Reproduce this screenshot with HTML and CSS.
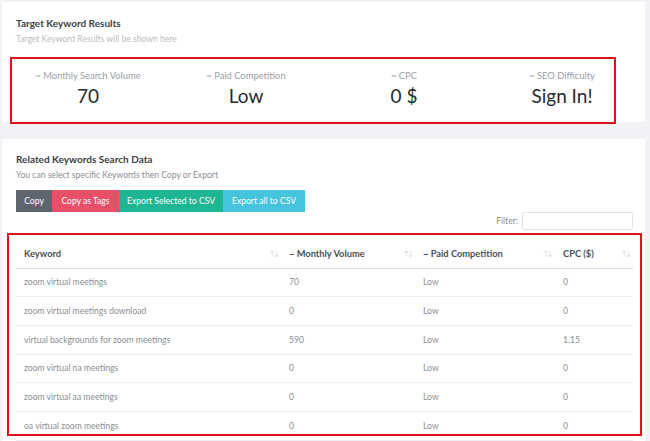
FILE: index.html
```html
<!DOCTYPE html>
<html>
<head>
<meta charset="utf-8">
<link rel="stylesheet" href="styles.css">
</head>
<body>
<div class="page">
  <section class="card card-top">
    <h2 class="card-title">Target Keyword Results</h2>
    <p class="card-sub">Target Keyword Results will be shown here</p>
    <div class="stats">
      <div class="stat"><div class="stat-label">~ Monthly Search Volume</div><div class="stat-value">70</div></div>
      <div class="stat"><div class="stat-label">~ Paid Competition</div><div class="stat-value">Low</div></div>
      <div class="stat"><div class="stat-label">~ CPC</div><div class="stat-value">0 $</div></div>
      <div class="stat"><div class="stat-label">~ SEO Difficulty</div><div class="stat-value">Sign In!</div></div>
    </div>
    <div class="mark mark-stats"></div>
  </section>

  <section class="card card-related">
    <h2 class="card-title">Related Keywords Search Data</h2>
    <p class="card-sub sub-dark">You can select specific Keywords then Copy or Export</p>
    <div class="btn-group">
      <button class="btn btn-gray">Copy</button><button class="btn btn-red">Copy as Tags</button><button class="btn btn-green">Export Selected to CSV</button><button class="btn btn-cyan">Export all to CSV</button>
    </div>
    <div class="filter-row">
      <label class="filter-label">Filter:</label><input class="filter-input" type="text">
    </div>
    <table class="kw-table">
      <thead>
        <tr>
          <th class="c1">Keyword<span class="sort">↑↓</span></th>
          <th class="c2">~ Monthly Volume<span class="sort">↑↓</span></th>
          <th class="c3">~ Paid Competition<span class="sort">↑↓</span></th>
          <th class="c4">CPC ($)<span class="sort">↑↓</span></th>
        </tr>
      </thead>
      <tbody>
        <tr><td>zoom virtual meetings</td><td>70</td><td>Low</td><td>0</td></tr>
        <tr><td>zoom virtual meetings download</td><td>0</td><td>Low</td><td>0</td></tr>
        <tr><td>virtual backgrounds for zoom meetings</td><td>590</td><td>Low</td><td>1.15</td></tr>
        <tr><td>zoom virtual na meetings</td><td>0</td><td>Low</td><td>0</td></tr>
        <tr><td>zoom virtual aa meetings</td><td>0</td><td>Low</td><td>0</td></tr>
        <tr><td>oa virtual zoom meetings</td><td>0</td><td>Low</td><td>0</td></tr>
      </tbody>
    </table>
    <div class="mark mark-table"></div>
  </section>
</div>
</body>
</html>
```

FILE: styles.css
```css
* { box-sizing: border-box; }
html, body { margin: 0; padding: 0; }
body {
  background: #f1f2f5;
  font-family: "Lato", "Open Sans", sans-serif;
  width: 650px;
  height: 441px;
  overflow: hidden;
}
.page {
  padding: 2px 5px 0 2px;
  display: flex;
  flex-direction: column;
  gap: 17px;
}
.card {
  background: #fff;
  position: relative;
  padding: 14px 9px 0 14px;
}
.card-top { height: 120px; }
.card-related { height: 310px; padding-top: 13px; }
.card-title {
  margin: 0;
  font-size: 10px;
  font-weight: 700;
  color: #3b3f46;
  line-height: 14px;
}
.card-sub {
  margin: 3px 0 0;
  font-size: 8.6px;
  color: #b9bcc1;
  line-height: 12px;
}
.card-sub.sub-dark { color: #8a8e94; }
.stats {
  display: grid;
  grid-template-columns: repeat(4, 158px);
  margin: 25px 0 0 -7px;
}
.stat { text-align: center; }
.stat-label {
  font-size: 9.4px;
  color: #9aa0a8;
  line-height: 12px;
}
.stat-value {
  margin-top: 3px;
  font-size: 19px;
  color: #262a30;
  line-height: 22px;
}
.mark {
  position: absolute;
  border: 2px solid #e3101b;
  pointer-events: none;
}
.mark-stats { left: 8px; top: 55px; width: 606px; height: 67px; }
.mark-table { left: 5px; top: 94px; width: 635px; height: 203px; }
.btn-group { display: flex; margin-top: 9px; }
.btn {
  border: 0;
  font-family: inherit;
  font-size: 8.6px;
  color: #fff;
  height: 22px;
  padding: 0;
  line-height: 22px;
}
.btn-gray { background: #5e656f; width: 36px; }
.btn-red { background: #e8506a; width: 67px; }
.btn-green { background: #1eb592; width: 104px; }
.btn-cyan { background: #47c4dd; width: 82px; }
.filter-row {
  display: flex;
  justify-content: flex-end;
  align-items: center;
  gap: 4px;
  margin-top: 0;
  padding-right: 3px;
}
.filter-label { font-size: 8.6px; color: #8a8e94; }
.filter-input {
  width: 111px;
  height: 18px;
  border: 1px solid #dfe2e6;
  border-radius: 2px;
  margin: 0;
}
.kw-table {
  border-collapse: collapse;
  width: 617px;
  margin-top: 9px;
  table-layout: fixed;
}
.kw-table th {
  position: relative;
  text-align: left;
  font-weight: 700;
  font-size: 9.3px;
  color: #4a4f56;
  height: 29px;
  padding: 0 8px;
  border-bottom: 1px solid #dcdfe3;
}
.kw-table .c1 { width: 265px; }
.kw-table .c2 { width: 134px; }
.kw-table .c3 { width: 140px; }
.kw-table .c4 { width: 78px; }
.sort {
  position: absolute;
  right: 3px;
  top: 10px;
  font-size: 7px;
  color: #d2d5da;
  letter-spacing: -1px;
  font-weight: 400;
}
.kw-table td {
  font-size: 8.6px;
  color: #8a8e94;
  height: 28.7px;
  padding: 0 8px;
  border-bottom: 1px solid #eceef1;
}
```
